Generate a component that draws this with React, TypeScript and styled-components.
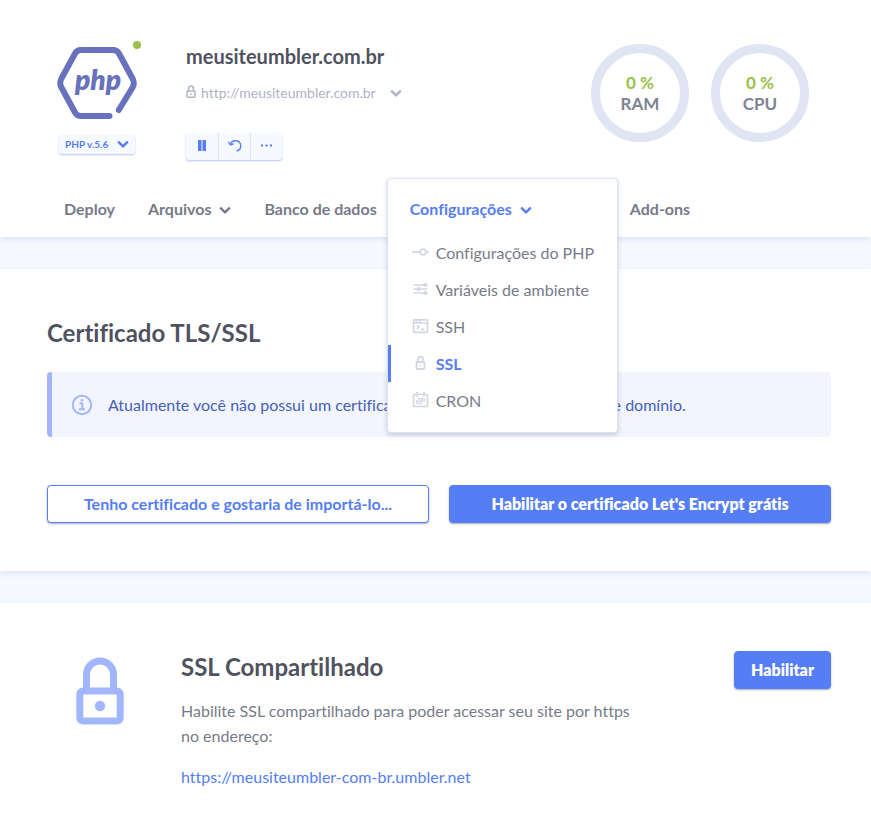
import React from "react";
import styled, { createGlobalStyle, css } from "styled-components";

const color = {
  canvas: "#f6faff",
  white: "#ffffff",
  heading: "#50535f",
  text: "#777b89",
  muted: "#aeb3c6",
  icon: "#d3d6e3",
  ring: "#dfe5f3",
  blue: "#557df4",
  lightBlue: "#a2b7fb",
  infoBg: "#f2f5fe",
  infoText: "#4560b6",
  php: "#6771bd",
  green: "#98c146",
};

const GlobalStyle = createGlobalStyle`
  *, *::before, *::after { box-sizing: border-box; }
  body {
    margin: 0;
    background: ${color.canvas};
    color: ${color.text};
    font-family: Lato, "Liberation Sans", sans-serif;
    font-size: 16px;
    font-variant-ligatures: none;
  }
  h1, h2, p, ul { margin: 0; padding: 0; }
  ul { list-style: none; }
  button { font-family: inherit; font-variant-ligatures: inherit; cursor: pointer; }
  svg { display: block; flex: none; }
`;

const Page = styled.div`
  display: flex;
  flex-direction: column;
  gap: 32px;
  min-height: 100vh;
`;

const panel = css`
  background: ${color.white};
  box-shadow: 0 2px 6px rgba(70, 80, 170, 0.15);
`;

const Header = styled.header`
  ${panel}
  position: relative;
  z-index: 1;
  padding: 44px 40px 0 47px;
`;

const Summary = styled.div`
  display: flex;
  align-items: flex-start;
  min-height: 137px;
  padding: 0 22px 0 10px;
`;

const Platform = styled.div`
  display: flex;
  flex-direction: column;
  align-items: center;
  gap: 16px;
  width: 80px;
  padding-top: 3px;
`;

const LogoBox = styled.div`
  position: relative;
`;

const StatusDot = styled.span`
  position: absolute;
  top: -6px;
  right: -4px;
  width: 8px;
  height: 8px;
  border-radius: 50%;
  background: ${color.green};
`;

const softButton = css`
  border: 0;
  background: ${color.canvas};
  color: ${color.blue};
  box-shadow: 0 1px 2px rgba(85, 125, 244, 0.45);
`;

const VersionButton = styled.button`
  ${softButton}
  display: flex;
  align-items: center;
  justify-content: space-between;
  width: 76px;
  height: 19px;
  padding: 0 6px 1px;
  border-radius: 3px;
  font-size: 10px;
  font-weight: 700;
  white-space: nowrap;
`;

const Site = styled.div`
  flex: 1;
  padding-left: 49px;
`;

const SiteName = styled.h1`
  color: ${color.heading};
  font-size: 20px;
  line-height: 24px;
  font-weight: 700;
`;

const SiteUrl = styled.button`
  display: flex;
  align-items: center;
  gap: 5px;
  height: 24px;
  margin-top: 12px;
  padding: 0;
  border: 0;
  background: none;
  color: ${color.muted};
  font-size: 14px;
  svg:last-child { margin: 2px 0 0 9px; }
`;

const Actions = styled.div`
  ${softButton}
  display: inline-flex;
  margin-top: 29px;
  border-radius: 3px;
`;

const Action = styled.button`
  display: flex;
  align-items: center;
  justify-content: center;
  width: 32px;
  height: 27px;
  padding: 0 0 2px;
  border: 0;
  background: none;
  color: inherit;
  & + & {
    border-left: 1px solid #e0e7fb;
  }
`;

const Gauges = styled.div`
  display: flex;
  gap: 22px;
`;

const GaugeBox = styled.div`
  display: flex;
  flex-direction: column;
  align-items: center;
  justify-content: center;
  width: 98px;
  height: 98px;
  border: 9px solid ${color.ring};
  border-radius: 50%;
  color: #7e8391;
  font-size: 17px;
  line-height: 21px;
  font-weight: 700;
  text-align: center;
`;

const GaugeValue = styled.span`
  color: ${color.green};
`;

const Nav = styled.nav`
  display: flex;
  gap: 33px;
  height: 56px;
  padding: 0 0 2px 17px;
`;

const NavItem = styled.div<{ $afterMenu?: boolean }>`
  position: relative;
  display: flex;
  margin-left: ${(p) => (p.$afterMenu ? "65px" : "0")};
`;

const NavButton = styled.button<{ $active?: boolean }>`
  position: relative;
  z-index: 2;
  display: flex;
  align-items: center;
  gap: 8px;
  padding: 0;
  border: 0;
  background: none;
  color: ${(p) => (p.$active ? color.blue : color.text)};
  font-size: 16px;
  font-weight: 700;
  white-space: nowrap;
  svg { margin-top: 3px; }
`;

const Menu = styled.ul`
  position: absolute;
  z-index: 1;
  top: -3px;
  left: -23px;
  width: 231px;
  padding: 55px 0 13px;
  border: 1px solid #dde3f3;
  border-radius: 4px;
  background: ${color.white};
  box-shadow: 0 2px 4px rgba(60, 70, 130, 0.25);
`;

const MenuLink = styled.a<{ $active?: boolean }>`
  display: flex;
  align-items: center;
  gap: 7px;
  height: 37px;
  padding-left: 21px;
  border-left: 3px solid ${(p) => (p.$active ? color.blue : "transparent")};
  color: ${(p) => (p.$active ? color.blue : color.text)};
  font-weight: ${(p) => (p.$active ? 700 : 400)};
  text-decoration: none;
  white-space: nowrap;
  svg { color: ${color.icon}; margin-bottom: 2px; }
`;

const Section = styled.section<{ $last?: boolean }>`
  ${panel}
  flex: ${(p) => (p.$last ? "1" : "none")};
  padding: 48px 40px ${(p) => (p.$last ? "24px" : "48px")} 47px;
`;

const Heading = styled.h2`
  color: ${color.heading};
  font-size: 24px;
  line-height: 32px;
  font-weight: 700;
`;

const Notice = styled.div`
  display: flex;
  align-items: center;
  gap: 15px;
  min-height: 65px;
  margin: 23px 0 48px;
  padding: 0 20px 0 19px;
  border-left: 5px solid ${color.lightBlue};
  border-radius: 4px;
  background: ${color.infoBg};
  color: ${color.infoText};
  svg { color: ${color.lightBlue}; }
`;

const Choices = styled.div`
  display: grid;
  grid-template-columns: 1fr 1fr;
  gap: 20px;
`;

const Button = styled.button<{ $outline?: boolean }>`
  height: 38px;
  padding: 0 16px 2px;
  border: 1px solid ${color.blue};
  border-radius: 4px;
  background: ${(p) => (p.$outline ? color.white : color.blue)};
  color: ${(p) => (p.$outline ? color.blue : color.white)};
  box-shadow: 0 1px 2px rgba(40, 50, 100, 0.4);
  font-size: 16px;
  font-weight: ${(p) => (p.$outline ? 700 : 800)};
  white-space: nowrap;
`;

const Shared = styled.div`
  display: flex;
  align-items: flex-start;
`;

const LockCell = styled.div`
  display: flex;
  justify-content: center;
  width: 106px;
  margin-right: 28px;
  padding-top: 6px;
  color: ${color.lightBlue};
`;

const SharedText = styled.div`
  flex: 1;
  line-height: 25px;
  p { max-width: 460px; margin-top: 15px; }
  p + p { margin-top: 16px; }
`;

const TextLink = styled.a`
  color: ${color.blue};
  text-decoration: none;
`;

const Chevron = ({ size = 12 }: { size?: number }) => (
  <svg width={size} height={size} viewBox="0 0 12 12" fill="none" stroke="currentColor" strokeWidth="2.4">
    <path d="M1.2 3.6 6 8.4l4.8-4.8" />
  </svg>
);

const PhpLogo = () => (
  <svg width="80" height="72" viewBox="0 0 80 72" role="img" aria-label="PHP">
    <path
      d="M52.5 69H24q-4 0-6-3.5L4.200 40q-2-4 0-8L18 6.500Q20 3 24 3h32q4 0 6 3.500L75.800 32q2 4 0 8L61.800 63"
      fill="none"
      stroke={color.php}
      strokeWidth="6"
      strokeLinecap="round"
    />
    <text
      x="41"
      y="43"
      textAnchor="middle"
      fill={color.php}
      fontFamily="Lato, sans-serif"
      fontSize="28"
      fontStyle="italic"
      fontWeight="800"
    >
      php
    </text>
  </svg>
);

const SmallLock = () => (
  <svg width="10" height="14" viewBox="0 0 10 14" fill="none" stroke="currentColor" strokeWidth="1.500">
    <rect x="1" y="6" width="8" height="6.200" rx="1" />
    <path d="M2.500 6V3.500a2.500 2.500 0 0 1 5 0V6" />
    <rect x="4.200" y="8.400" width="1.600" height="1.400" fill="currentColor" stroke="none" />
  </svg>
);

const BigLock = () => (
  <svg width="48" height="68" viewBox="0 0 48 68" fill="none" stroke="currentColor" strokeWidth="7">
    <rect x="3.800" y="34" width="40.400" height="30" rx="3" />
    <path d="M10.500 34V17.500a13.500 13.500 0 0 1 27 0V34" />
    <circle cx="24" cy="49" r="5.200" fill="currentColor" stroke="none" />
  </svg>
);

const PauseIcon = () => (
  <svg width="8" height="11" viewBox="0 0 8 11" fill="currentColor">
    <path d="M0 0h3.500v11H0zM4.500 0H8v11H4.500z" />
  </svg>
);

const RestartIcon = () => (
  <svg width="14" height="13" viewBox="0 0 14 13" fill="none" stroke="currentColor" strokeWidth="1.400">
    <path d="M2.500 5.500A5.200 5.200 0 1 1 8.500 12" />
    <path d="m.5 2.800 1.900 3.200 3.400-1.300" />
  </svg>
);

const MoreIcon = () => (
  <svg width="11" height="3" viewBox="0 0 11 3" fill="currentColor">
    <path d="M0 .5h2v2H0zM4.500.5h2v2h-2zM9 .5h2v2H9z" />
  </svg>
);

const InfoIcon = () => (
  <svg width="22" height="22" viewBox="0 0 22 22" fill="none" stroke="currentColor" strokeWidth="2">
    <circle cx="11" cy="11" r="9.200" />
    <path d="M8.500 9.300H11.300V15M8 15.200h6" />
    <circle cx="11" cy="6.200" r="1.300" fill="currentColor" stroke="none" />
  </svg>
);

const menuSvg = { width: 17, height: 16, viewBox: "0 0 17 16", fill: "none", stroke: "currentColor" };

const NodeIcon = () => (
  <svg {...menuSvg} strokeWidth="1.800">
    <path d="M.3 8H8M14 8h2.700" />
    <circle cx="11" cy="8" r="2.800" />
  </svg>
);

const SlidersIcon = () => (
  <svg {...menuSvg} strokeWidth="1.700">
    <path d="M1.500 4h14M1.500 8h14M1.500 12h14" />
    <g fill="currentColor" stroke="none">
      <circle cx="13.300" cy="4" r="2" />
      <circle cx="6.700" cy="8" r="2" />
      <circle cx="13.300" cy="12" r="2" />
    </g>
  </svg>
);

const TerminalIcon = () => (
  <svg {...menuSvg} strokeWidth="1.700">
    <rect x="1.500" y="1.800" width="14" height="12.500" rx="1" />
    <path d="M1.500 5h14M4.500 2v3M8 2v3M5 7.500l2 1.800-2 1.800M9 11.300h3.500" />
  </svg>
);

const LockIcon = () => (
  <svg {...menuSvg} strokeWidth="1.800">
    <rect x="4.500" y="7" width="8" height="7" rx="1" />
    <path d="M5.800 7V4.300a2.700 2.700 0 0 1 5.400 0V7" />
    <path d="M7.700 9.800h1.600v1.400H7.700z" fill="currentColor" stroke="none" />
  </svg>
);

const CalendarIcon = () => (
  <svg {...menuSvg} strokeWidth="1.700">
    <rect x="1.500" y="2.500" width="14" height="12" rx="1" />
    <path d="M5 0v4.500M12 0v4.500" />
    <path
      d="M6.400 6.100h2v1.700h-2zM8.900 6.100h2v1.700h-2zM11.400 6.100h2v1.700h-2zM3.900 8.300h2V10h-2zM6.400 8.300h2V10h-2zM8.900 8.300h2V10h-2zM11.400 8.300h1.500V10h-1.500zM3.900 10.500h2v1.700h-2zM6.400 10.500h2v1.700h-2zM8.900 10.500h1.500v1.700H8.900z"
      fill="currentColor"
      stroke="none"
    />
  </svg>
);

const menuItems = [
  { label: "Configurações do PHP", Icon: NodeIcon },
  { label: "Variáveis de ambiente", Icon: SlidersIcon },
  { label: "SSH", Icon: TerminalIcon },
  { label: "SSL", Icon: LockIcon, active: true },
  { label: "CRON", Icon: CalendarIcon },
];

const Gauge = ({ value, label }: { value: number; label: string }) => (
  <GaugeBox>
    <GaugeValue>{value} %</GaugeValue>
    <span>{label}</span>
  </GaugeBox>
);

export default function App() {
  return (
    <>
      <GlobalStyle />
      <Page>
        <Header>
          <Summary>
            <Platform>
              <LogoBox>
                <PhpLogo />
                <StatusDot />
              </LogoBox>
              <VersionButton aria-haspopup="listbox">
                PHP v.5.6 <Chevron />
              </VersionButton>
            </Platform>
            <Site>
              <SiteName>meusiteumbler.com.br</SiteName>
              <SiteUrl aria-haspopup="menu">
                <SmallLock />
                http://meusiteumbler.com.br
                <Chevron />
              </SiteUrl>
              <Actions>
                <Action aria-label="Pausar"><PauseIcon /></Action>
                <Action aria-label="Reiniciar"><RestartIcon /></Action>
                <Action aria-label="Mais opções"><MoreIcon /></Action>
              </Actions>
            </Site>
            <Gauges>
              <Gauge value={0} label="RAM" />
              <Gauge value={0} label="CPU" />
            </Gauges>
          </Summary>
          <Nav>
            <NavItem><NavButton>Deploy</NavButton></NavItem>
            <NavItem><NavButton aria-haspopup="menu">Arquivos <Chevron /></NavButton></NavItem>
            <NavItem><NavButton>Banco de dados</NavButton></NavItem>
            <NavItem>
              <NavButton $active aria-haspopup="menu" aria-expanded="true">
                Configurações <Chevron />
              </NavButton>
              <Menu>
                {menuItems.map(({ label, Icon, active }) => (
                  <li key={label}>
                    <MenuLink href="#" $active={active}>
                      <Icon />
                      {label}
                    </MenuLink>
                  </li>
                ))}
              </Menu>
            </NavItem>
            <NavItem $afterMenu><NavButton>Add-ons</NavButton></NavItem>
          </Nav>
        </Header>

        <Section>
          <Heading>Certificado TLS/SSL</Heading>
          <Notice>
            <InfoIcon />
            <p>Atualmente você não possui um certificado TLS/SSL cadastrado para este domínio.</p>
          </Notice>
          <Choices>
            <Button $outline>Tenho certificado e gostaria de importá-lo...</Button>
            <Button>Habilitar o certificado Let's Encrypt grátis</Button>
          </Choices>
        </Section>

        <Section $last>
          <Shared>
            <LockCell><BigLock /></LockCell>
            <SharedText>
              <Heading>SSL Compartilhado</Heading>
              <p>Habilite SSL compartilhado para poder acessar seu site por https no endereço:</p>
              <p><TextLink href="#">https://meusiteumbler-com-br.umbler.net</TextLink></p>
            </SharedText>
            <Button>Habilitar</Button>
          </Shared>
        </Section>
      </Page>
    </>
  );
}
